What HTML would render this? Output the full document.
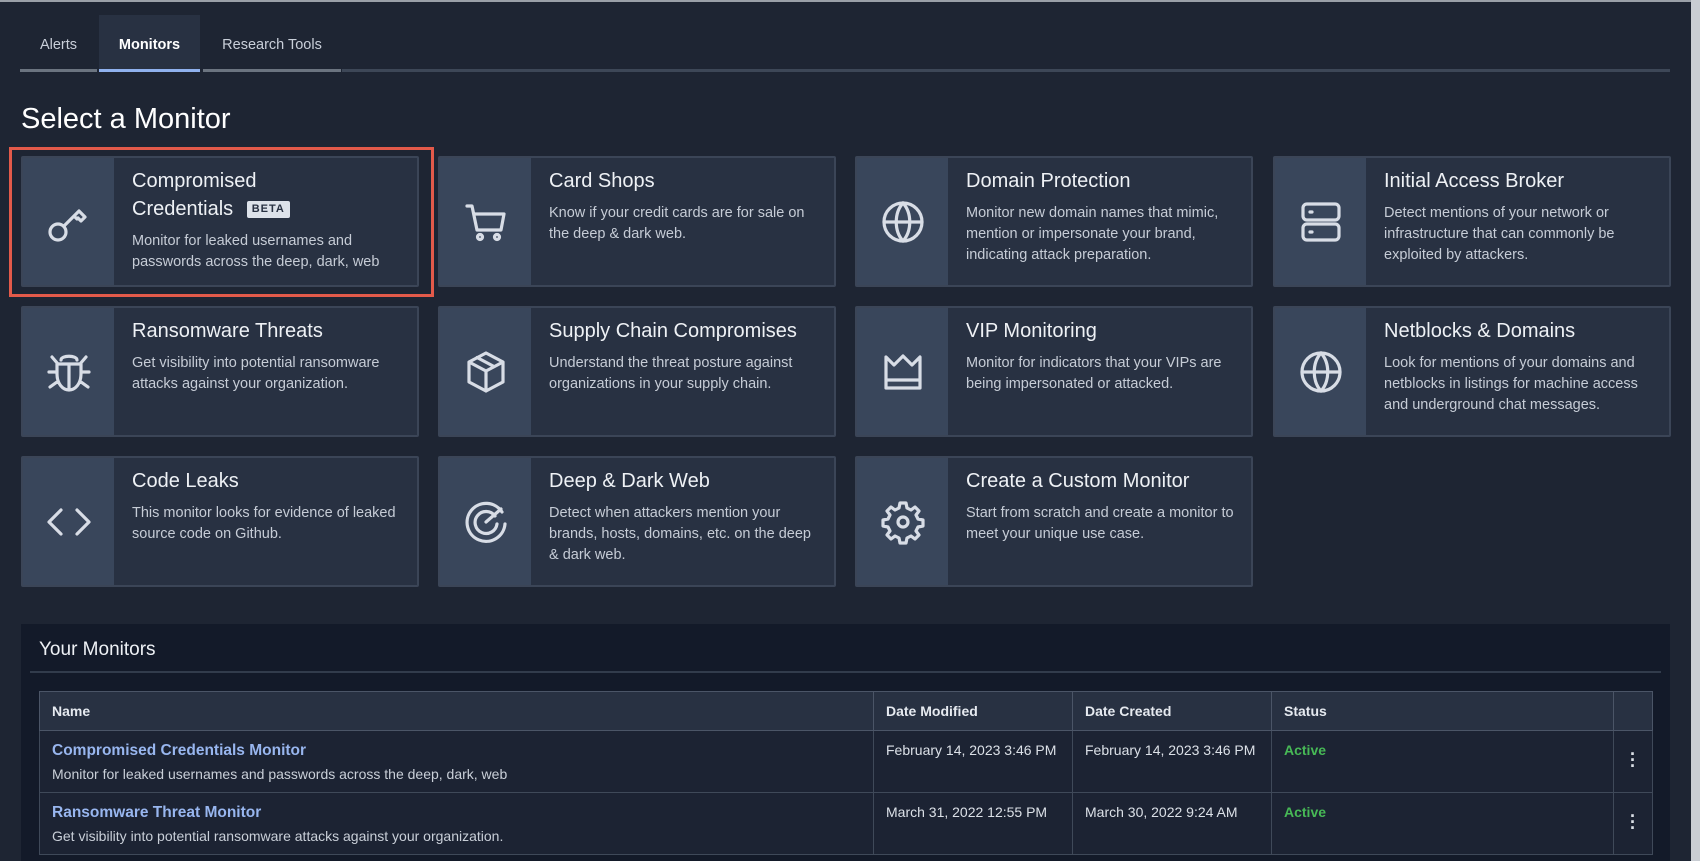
<!DOCTYPE html>
<html><head><meta charset="utf-8"><style>
*{box-sizing:border-box;margin:0;padding:0}
body{width:1700px;height:861px;overflow:hidden;background:#1e2533;font-family:"Liberation Sans",sans-serif;color:#e3e7ee;position:relative}
.edge{position:absolute;right:0;top:0;width:9px;height:861px;background:#c9cdd3}
.top{position:absolute;left:0;top:0;width:1700px;height:2px;background:#9aa0a8}
.tabs{position:absolute;left:20px;top:15px;height:57px}
.tab{position:absolute;top:0;height:57px;font-size:14.5px;color:#c9cfd9;line-height:60px;text-align:center;border-bottom:3px solid #6b7480}
.tab.act{background:#283142;color:#fff;font-weight:bold;border-bottom-color:#8fb1ee}
.tline{position:absolute;left:342px;top:69px;width:1328px;height:3px;background:#3d4757}
h1{position:absolute;left:21px;top:103px;font-size:29px;font-weight:normal;color:#fff}
.card{position:absolute;width:398px;height:131px;background:#283142;border:2px solid #3b4557;border-radius:2px}
.ic{position:absolute;left:0;top:0;width:91px;height:100%;background:#39465b;display:flex;align-items:center;justify-content:center}
.ic svg{width:48px;height:48px;fill:none;stroke:#d8dde6;stroke-width:3.2;stroke-linecap:round;stroke-linejoin:round}
.ct{position:absolute;left:109px;top:9px;right:16px}
.ct b{display:block;font-weight:normal;font-size:20px;color:#eef1f5;line-height:28px;margin-bottom:8px}
.ct p{font-size:14.5px;color:#c6ccd6;line-height:21px}
.beta{display:inline-block;background:#dde2ea;color:#283142;font-size:11px;font-weight:bold;padding:1px 5px;border-radius:2px;vertical-align:3px;margin-left:8px;letter-spacing:1px;line-height:15px}
.red{position:absolute;left:9px;top:147px;width:425px;height:150px;border:3px solid #e35a4a}
.panel{position:absolute;left:21px;top:624px;width:1649px;height:237px;background:#131a29}
.panel h2{position:absolute;left:18px;top:15px;font-size:19px;font-weight:normal;color:#eef1f5}
.pdiv{position:absolute;left:9px;top:47px;width:1631px;height:2px;background:#323c4c}
table{position:absolute;left:18px;top:67px;width:1614px;border-collapse:collapse;font-size:14px}
th{background:#283142;height:39px;text-align:left;padding-left:12px;font-weight:bold;color:#e6eaf0;border:1px solid #4b5567}
td{height:62px;vertical-align:top;padding:11px 12px 0;border:1px solid #3f4959;color:#dbe0e7;background:#1c2333}
td a{color:#98b6ef;font-weight:bold;font-size:15.5px;text-decoration:none}
td .d{margin-top:6px;color:#c9cfd8}
.act{color:#47b956;font-weight:bold}
.dots{text-align:center;font-weight:bold;font-size:18px;padding-top:20px;line-height:6px}
</style></head><body>
<div class="top"></div>
<div class="tabs">
<div class="tab" style="left:0;width:77px">Alerts</div>
<div class="tab act" style="left:79px;width:101px">Monitors</div>
<div class="tab" style="left:183px;width:138px">Research Tools</div>
</div>
<div class="tline"></div>
<h1>Select a Monitor</h1>

<div class="card" style="left:21px;top:156px"><div class="ic"><svg viewBox="0 0 48 48"><circle cx="13" cy="34" r="8"/><path d="M19 28L34 13l6 6-4 4-3-3M29 18l3 3"/></svg></div><div class="ct"><b>Compromised<br>Credentials <span class="beta">BETA</span></b><p>Monitor for leaked usernames and passwords across the deep, dark, web</p></div></div>
<div class="card" style="left:438px;top:156px"><div class="ic"><svg viewBox="0 0 48 48"><path d="M5 8h5l5 24h24l3-16H13"/><circle cx="18" cy="39" r="2.5"/><circle cx="35" cy="39" r="2.5"/></svg></div><div class="ct"><b>Card Shops</b><p>Know if your credit cards are for sale on the deep &amp; dark web.</p></div></div>
<div class="card" style="left:855px;top:156px"><div class="ic"><svg viewBox="0 0 48 48"><circle cx="24" cy="24" r="19"/><path d="M5 24h38M24 5c-9 10-9 28 0 38M24 5c9 10 9 28 0 38"/></svg></div><div class="ct"><b>Domain Protection</b><p>Monitor new domain names that mimic, mention or impersonate your brand, indicating attack preparation.</p></div></div>
<div class="card" style="left:1273px;top:156px"><div class="ic"><svg viewBox="0 0 48 48"><rect x="6" y="6" width="36" height="16" rx="4"/><rect x="6" y="26" width="36" height="16" rx="4"/><path d="M13 14h2M13 34h2"/></svg></div><div class="ct"><b>Initial Access Broker</b><p>Detect mentions of your network or infrastructure that can commonly be exploited by attackers.</p></div></div>

<div class="card" style="left:21px;top:306px"><div class="ic"><svg viewBox="0 0 48 48"><path d="M16 12c0-5 16-5 16 0M12 16h24v10c0 10-6 16-12 16s-12-6-12-16zM24 16v26M12 24H4M44 24h-8M12 34l-7 5M36 34l7 5M13 16L7 9M35 16l6-7"/></svg></div><div class="ct"><b>Ransomware Threats</b><p>Get visibility into potential ransomware attacks against your organization.</p></div></div>
<div class="card" style="left:438px;top:306px"><div class="ic"><svg viewBox="0 0 48 48"><path d="M24 5L41 14v20L24 43 7 34V14zM7 14l17 9 17-9M24 23v20M15 9.5l17 9"/></svg></div><div class="ct"><b>Supply Chain Compromises</b><p>Understand the threat posture against organizations in your supply chain.</p></div></div>
<div class="card" style="left:855px;top:306px"><div class="ic"><svg viewBox="0 0 48 48"><path d="M7 9l8 8 9-9 9 9 8-8v31H7zM7 32h34"/></svg></div><div class="ct"><b>VIP Monitoring</b><p>Monitor for indicators that your VIPs are being impersonated or attacked.</p></div></div>
<div class="card" style="left:1273px;top:306px"><div class="ic"><svg viewBox="0 0 48 48"><circle cx="24" cy="24" r="19"/><path d="M5 24h38M24 5c-9 10-9 28 0 38M24 5c9 10 9 28 0 38"/></svg></div><div class="ct"><b>Netblocks &amp; Domains</b><p>Look for mentions of your domains and netblocks in listings for machine access and underground chat messages.</p></div></div>

<div class="card" style="left:21px;top:456px"><div class="ic"><svg viewBox="0 0 48 48"><path d="M16 12L4 24l12 12M32 12l12 12-12 12"/></svg></div><div class="ct"><b>Code Leaks</b><p>This monitor looks for evidence of leaked source code on Github.</p></div></div>
<div class="card" style="left:438px;top:456px"><div class="ic"><svg viewBox="0 0 48 48"><path d="M40 14A19 19 0 1 0 43 26M33 18a11 11 0 1 0 2 8M24 24l15-13"/></svg></div><div class="ct"><b>Deep &amp; Dark Web</b><p>Detect when attackers mention your brands, hosts, domains, etc. on the deep &amp; dark web.</p></div></div>
<div class="card" style="left:855px;top:456px"><div class="ic"><svg viewBox="0 0 48 48"><circle cx="24" cy="24" r="5"/><path d="M21 5h6l1 5 4 2 4-3 4 4-3 4 2 4 5 1v6l-5 1-2 4 3 4-4 4-4-3-4 2-1 5h-6l-1-5-4-2-4 3-4-4 3-4-2-4-5-1v-6l5-1 2-4-3-4 4-4 4 3 4-2z"/></svg></div><div class="ct"><b>Create a Custom Monitor</b><p>Start from scratch and create a monitor to meet your unique use case.</p></div></div>

<div class="red"></div>

<div class="panel">
<h2>Your Monitors</h2>
<div class="pdiv"></div>
<table>
<tr><th style="width:834px">Name</th><th style="width:199px">Date Modified</th><th style="width:199px">Date Created</th><th style="width:342px">Status</th><th></th></tr>
<tr><td><a>Compromised Credentials Monitor</a><div class="d">Monitor for leaked usernames and passwords across the deep, dark, web</div></td><td>February 14, 2023 3:46 PM</td><td>February 14, 2023 3:46 PM</td><td class="act">Active</td><td class="dots">·<br>·<br>·</td></tr>
<tr><td><a>Ransomware Threat Monitor</a><div class="d">Get visibility into potential ransomware attacks against your organization.</div></td><td>March 31, 2022 12:55 PM</td><td>March 30, 2022 9:24 AM</td><td class="act">Active</td><td class="dots">·<br>·<br>·</td></tr>
</table>
</div>
<div class="edge"></div>
</body></html>
